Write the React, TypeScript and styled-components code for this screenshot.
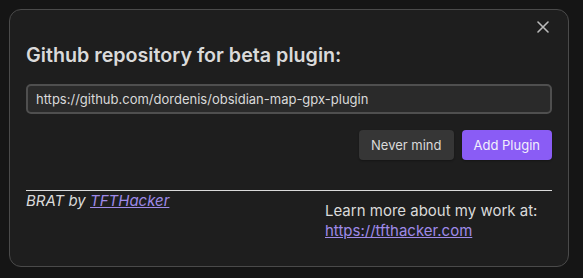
import styled, { createGlobalStyle } from "styled-components";

const Global = createGlobalStyle`
  html, body {
    margin: 0;
    padding: 0;
    background: #151515;
    font-family: Inter, "Noto Sans", sans-serif;
    color: #dadada;
  }
`;

const Page = styled.div`
  width: 583px;
  height: 278px;
  padding: 9px 14px 11px 9px;
  box-sizing: border-box;
`;

const Modal = styled.div`
  position: relative;
  height: 100%;
  box-sizing: border-box;
  background: #1e1e1e;
  border: 1px solid #4a4a4a;
  border-radius: 12px;
  padding: 31px 16px 16px 16px;
  display: flex;
  flex-direction: column;
`;

const Close = styled.button`
  position: absolute;
  top: 4px;
  right: 12px;
  width: 26px;
  height: 26px;
  border: none;
  background: transparent;
  padding: 0;
  display: flex;
  align-items: center;
  justify-content: center;
  color: #bababa;
`;

const Title = styled.div`
  font-size: 19.7px;
  font-weight: 600;
  line-height: 28px;
  color: #dadada;
  margin-bottom: 15px;
`;

const Input = styled.input`
  width: 100%;
  box-sizing: border-box;
  height: 30px;
  background: #2a2a2a;
  border: 2px solid #4f4f4f;
  border-radius: 5px;
  padding: 0 8px;
  font-family: Inter, sans-serif;
  font-size: 13px;
  color: #dadada;
  outline: none;
`;

const Actions = styled.div`
  display: flex;
  justify-content: flex-end;
  gap: 8px;
  margin-top: 16px;
`;

const Button = styled.button<{ $primary?: boolean }>`
  height: 30px;
  padding: 0 12px;
  border: none;
  border-radius: 4px;
  font-family: Inter, sans-serif;
  font-size: 13px;
  background: ${({ $primary }) => ($primary ? "#8a5cf5" : "#363636")};
  color: ${({ $primary }) => ($primary ? "#f2f0fc" : "#dadada")};
  box-shadow: 0 1px 2px rgba(0, 0, 0, 0.3);
`;

const Divider = styled.hr`
  border: none;
  border-top: 1px solid #dadada;
  margin: 30px 0 0 0;
`;

const Footer = styled.div`
  display: flex;
  justify-content: space-between;
  font-size: 15px;
  line-height: 20px;
`;

const Credit = styled.div`
  font-style: italic;
`;

const Link = styled.a`
  color: #9f8ae8;
  text-decoration: underline;
`;

const More = styled.div`
  width: 227px;
  padding-top: 10px;
`;

export default function App() {
  return (
    <>
      <Global />
      <Page>
        <Modal>
          <Close>
            <svg width="12" height="12" viewBox="0 0 12 12">
              <path d="M1 1L11 11M11 1L1 11" stroke="currentColor" strokeWidth="1.6" strokeLinecap="round" />
            </svg>
          </Close>
          <Title>Github repository for beta plugin:</Title>
          <Input defaultValue="https://github.com/dordenis/obsidian-map-gpx-plugin" />
          <Actions>
            <Button>Never mind</Button>
            <Button $primary>Add Plugin</Button>
          </Actions>
          <Divider />
          <Footer>
            <Credit>
              BRAT by <Link href="#">TFTHacker</Link>
            </Credit>
            <More>
              Learn more about my work at:
              <br />
              <Link href="#">https://tfthacker.com</Link>
            </More>
          </Footer>
        </Modal>
      </Page>
    </>
  );
}
